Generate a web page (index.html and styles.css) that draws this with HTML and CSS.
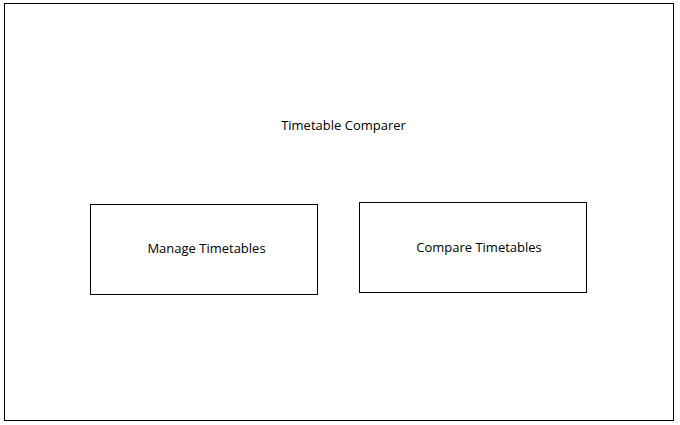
FILE: index.html
```html
<!DOCTYPE html>
<html lang="en">
<head>
    <meta charset="UTF-8">
    <meta name="viewport" content="width=device-width, initial-scale=1.0">
    <title>Timetable Comparer</title>
    <link rel="stylesheet" href="styles.css">
</head>
<body>
    <div class="frame">
        <div class="title">Timetable Comparer</div>

        <div class="actions">
            <div class="action action-manage">Manage Timetables</div>
            <div class="action action-compare">Compare Timetables</div>
        </div>
    </div>
</body>
</html>
```

FILE: styles.css
```css
body {
    margin: 0;
    background: #fff;
    font-family: "Open Sans", "Liberation Sans", sans-serif;
    font-size: 13px;
    color: #000;
}
.frame {
    box-sizing: border-box;
    width: 670px;
    height: 418px;
    margin: 3px 0 0 4px;
    border: 1px solid #000;
    padding: 112px 0 0 85px;
}
.title {
    width: 497px;
    padding-left: 5px;
    line-height: 18px;
    text-align: center;
}
.actions {
    display: flex;
    align-items: flex-start;
    gap: 41px;
    margin-top: 68px;
}
.action {
    box-sizing: border-box;
    width: 228px;
    height: 91px;
    border: 1px solid #000;
    display: flex;
    align-items: center;
    justify-content: center;
}
.action-manage {
    margin-top: 2px;
    padding: 0 0 3px 5px;
}
.action-compare {
    padding: 0 0 2px 12px;
}
```
